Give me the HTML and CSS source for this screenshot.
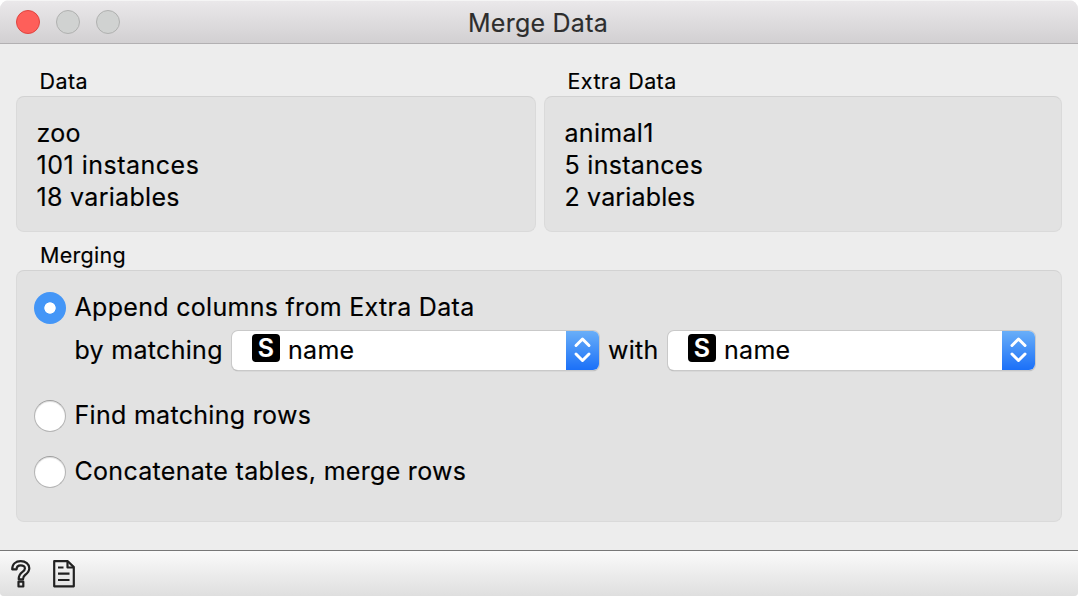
FILE: index.html
```html
<!DOCTYPE html>
<html lang="en">
<head>
<meta charset="utf-8">
<title>Merge Data</title>
<link rel="stylesheet" href="styles.css">
</head>
<body>
<div class="window">
  <header class="titlebar">
    <div class="lights"><span class="light close"></span><span class="light"></span><span class="light"></span></div>
    <h1 class="title">Merge Data</h1>
  </header>
  <main class="content">
    <div class="sources">
      <section class="group">
        <h2 class="caption">Data</h2>
        <div class="box info"><p>zoo</p><p class="count">101 instances</p><p>18 variables</p></div>
      </section>
      <section class="group">
        <h2 class="caption">Extra Data</h2>
        <div class="box info"><p>animal1</p><p>5 instances</p><p class="short">2 variables</p></div>
      </section>
    </div>
    <section class="group merging">
      <h2 class="caption">Merging</h2>
      <div class="box options">
        <div class="option"><span class="radio checked"></span><span>Append columns from Extra Data</span></div>
        <div class="match">
          <span class="by">by matching</span>
          <div class="select"><span class="badge">S</span><span class="value">name</span><span class="stepper"><svg width="33" height="40" viewBox="0 0 33 40"><path d="M10 15.500l6.500-6.500L23 15.500M10 24l6.500 6.500L23 24"/></svg></span></div>
          <span class="with">with</span>
          <div class="select"><span class="badge">S</span><span class="value">name</span><span class="stepper"><svg width="33" height="40" viewBox="0 0 33 40"><path d="M10 15.500l6.500-6.500L23 15.500M10 24l6.500 6.500L23 24"/></svg></span></div>
        </div>
        <div class="option find"><span class="radio"></span><span>Find matching rows</span></div>
        <div class="option concat"><span class="radio"></span><span>Concatenate tables, merge rows</span></div>
      </div>
    </section>
  </main>
  <footer class="toolbar">
    <svg width="20" height="28" viewBox="0 0 20 28"><path d="M1.200 9.300C1.200 3.900 4.800 1.200 9.700 1.200s8.600 2.800 8.600 7.100c0 3.400-1.900 5-4.200 6.700-1.600 1.200-2.100 2.100-2.100 4.300H7.700c0-3.800 1-5.400 3.500-7.200 1.700-1.200 2.700-2.100 2.700-3.700 0-1.900-1.600-3.100-4.100-3.100-2.800 0-4.200 1.500-4.200 4z"/><path d="M7.500 21.700h4.800v4.800H7.500z"/></svg>
    <svg width="22" height="28" viewBox="0 0 22 28"><path d="M1.200 1.200h13.600l6 5.900v19.200H1.200z"/><path d="M14.500 1.500v6h6M5 7.500h5.500M5 13.700h11.500M5 20h11.500"/></svg>
  </footer>
</div>
</body>
</html>
```
FILE: styles.css
```css
* { box-sizing: border-box; }
body { margin: 0; background: #fff; }
h1, h2, p { margin: 0; font-weight: 400; }
svg { display: block; fill: none; }

.window {
  width: 1078px;
  height: 596px;
  display: flex;
  flex-direction: column;
  overflow: hidden;
  border-radius: 9px 9px 4px 4px;
  background: #ededed;
  color: #000;
  font: 25px/32px Inter, "Liberation Sans", sans-serif;
  letter-spacing: .3px;
  -webkit-text-stroke: .15px;
  white-space: nowrap;
}

.titlebar {
  height: 44px;
  display: grid;
  grid-template-columns: 1fr auto 1fr;
  background: linear-gradient(#eae8ea, #d2d0d2);
  border-top: 1px solid #f5f5f5;
  border-bottom: 1px solid #b2b0b2;
}
.lights { display: flex; gap: 16px; padding: 9px 0 0 16px; }
.light { width: 24px; height: 24px; border: 1px solid #b0b1b0; border-radius: 50%; background: #d0d2d1; }
.close { border-color: #e0443f; background: #fe5f5a; }
.title { margin-left: -2px; font-size: 25px; line-height: 44px; letter-spacing: .25px; color: #2d2d2d; }

.content { flex: 1; padding: 22px 16px 0; }
.sources { display: grid; grid-template-columns: 520px 518px; gap: 8px; }
.caption { height: 30px; padding-left: 23.500px; font-size: 21.500px; line-height: 30px; letter-spacing: .4px; }
.box { background: #e2e2e2; border: 1px solid #dadada; border-top-color: #d2d2d2; border-radius: 8px; }
.info { height: 136px; padding: 20px 0 0 19.500px; }
.count { letter-spacing: .5px; }
.short { letter-spacing: .15px; }
.merging { padding-top: 8px; }
.merging .caption { padding-left: 24px; letter-spacing: .3px; }
.options { height: 252px; padding: 20px 0 0 17px; }
.option { display: flex; gap: 8.500px; height: 34px; }
.radio { width: 32px; height: 32px; margin-top: 1px; border: 1px solid #b4b4b4; border-top-color: #9e9e9e; border-radius: 50%; background: #fff; box-shadow: inset 0 1px 1px #ddd; }
.checked { border: 0; box-shadow: none; background: radial-gradient(circle, #fff 5.300px, #4496f7 6px); }
.match { display: flex; align-items: center; height: 42px; padding-left: 40.500px; margin-top: 4px; }
.by { width: 157.500px; }
.with { width: 69px; padding-left: 9px; }
.select { display: flex; align-items: center; width: 367px; height: 39px; overflow: hidden; border-radius: 6px; background: #fff; box-shadow: 0 0 0 1px #c9c9c9, 0 1px 1px #888; }
.value { letter-spacing: .3px; }
.badge { width: 28px; height: 28px; margin: -4px 8px 0 20px; border-radius: 4px; background: #000; color: #fff; font-size: 25px; font-weight: 600; line-height: 28px; text-align: center; }
.stepper { margin-left: auto; height: 40px; background: linear-gradient(#6bb0f8, #1b70f8); }
.stepper path { stroke: #fff; stroke-width: 3; stroke-linecap: round; stroke-linejoin: round; }
.find { margin-top: 28px; }
.concat { margin-top: 22px; }

.toolbar { display: flex; gap: 22px; height: 46px; padding: 9px 0 0 11px; border-top: 1px solid #777; background: linear-gradient(#fafafa, #dfdfdf); }
.toolbar path { stroke: #222; stroke-width: 2.200; stroke-linejoin: round; }
```
